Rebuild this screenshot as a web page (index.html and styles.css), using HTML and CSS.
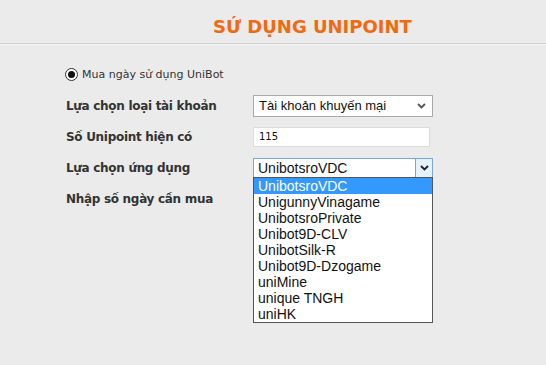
FILE: index.html
```html
<!DOCTYPE html>
<html lang="vi">

<head>
    <meta charset="UTF-8">
    <title>Sử dụng Unipoint</title>
    <link rel="stylesheet" href="styles.css">
</head>

<body>
    <header class="page-title">
        <h1>SỨ DỤNG UNIPOINT</h1>
    </header>

    <form class="use-form">
        <label class="radio-row">
            <span class="radio"><span class="radio-dot"></span></span>
            Mua ngày sử dụng UniBot
        </label>

        <div class="field-grid">
            <div class="field-label">Lựa chọn loại tài khoản</div>
            <div class="select big">
                <span>Tài khoản khuyến mại</span>
                <svg class="chev" width="9" height="6" viewBox="0 0 9 6"><path d="M1 1 L4.5 4.5 L8 1" fill="none" stroke="#555" stroke-width="1.8"/></svg>
            </div>

            <div class="field-label">Số Unipoint hiện có</div>
            <div class="text-input">115</div>

            <div class="field-label">Lựa chọn ứng dụng</div>
            <div class="select-wrap">
                <div class="select open">
                    <span>UnibotsroVDC</span>
                    <span class="arrow-btn">
                        <svg width="9" height="6" viewBox="0 0 9 6"><path d="M1 1 L4.5 4.5 L8 1" fill="none" stroke="#222" stroke-width="1.8"/></svg>
                    </span>
                </div>
                <ul class="dropdown">
                    <li class="active">UnibotsroVDC</li>
                    <li>UnigunnyVinagame</li>
                    <li>UnibotsroPrivate</li>
                    <li>Unibot9D-CLV</li>
                    <li>UnibotSilk-R</li>
                    <li>Unibot9D-Dzogame</li>
                    <li>uniMine</li>
                    <li>unique TNGH</li>
                    <li>uniHK</li>
                </ul>
            </div>

            <div class="field-label">Nhập số ngày cần mua</div>
            <div></div>
        </div>
    </form>
</body>

</html>
```

FILE: styles.css
```css
html,
body {
    margin: 0;
    height: 100%;
}

body {
    background-color: #ebebeb;
    font-family: "DejaVu Sans", Verdana, sans-serif;
    color: #333;
}

.page-title {
    height: 44px;
    border-bottom: 1px solid #cfcfcf;
    box-shadow: 0 1px 0 #f6f6f6;
    padding-left: 213px;
    box-sizing: border-box;
}

.page-title h1 {
    margin: 0;
    padding-top: 15px;
    font-size: 18px;
    line-height: 24px;
    color: #f26a10;
    font-weight: bold;
}

.use-form {
    padding: 22px 0 0 65px;
}

.radio-row {
    display: flex;
    align-items: center;
    gap: 4px;
    font-size: 11px;
    color: #333;
    height: 16px;
}

.radio {
    width: 11px;
    height: 11px;
    border: 1px solid #333;
    border-radius: 50%;
    background: #fff;
    display: flex;
    align-items: center;
    justify-content: center;
}

.radio-dot {
    width: 7px;
    height: 7px;
    border-radius: 50%;
    background: #111;
}

.field-grid {
    display: grid;
    grid-template-columns: 188px 180px;
    grid-auto-rows: 31px;
    align-items: center;
    margin-top: 8px;
}

.field-label {
    font-size: 12px;
    font-weight: bold;
    letter-spacing: -0.3px;
    color: #333;
    padding-left: 1px;
}

.select {
    height: 22px;
    box-sizing: border-box;
    background: #fff;
    border: 1px solid #a9a9a9;
    display: flex;
    align-items: center;
    justify-content: space-between;
    font-family: "Liberation Sans", Arial, sans-serif;
    color: #111;
}

.select.big {
    font-size: 13px;
    padding: 0 6px 0 5px;
}

.text-input {
    width: 177px;
    height: 20px;
    box-sizing: border-box;
    background: #fff;
    border: 1px solid #dcdcdc;
    font-family: "DejaVu Sans", Verdana, sans-serif;
    font-size: 10px;
    line-height: 18px;
    padding-left: 5px;
    color: #111;
}

.select-wrap {
    position: relative;
}

.select.open {
    height: 20px;
    font-size: 14px;
    border-color: #7aa7d8;
    padding-left: 4px;
}

.arrow-btn {
    width: 16px;
    height: 18px;
    background: #e5f1fb;
    border-left: 1px solid #7aa7d8;
    display: flex;
    align-items: center;
    justify-content: center;
}

.dropdown {
    position: absolute;
    left: 0;
    top: 19px;
    width: 180px;
    box-sizing: border-box;
    margin: 0;
    padding: 0;
    list-style: none;
    background: #fff;
    border: 1px solid #555;
    font-family: "Liberation Sans", Arial, sans-serif;
    font-size: 14px;
    color: #111;
    z-index: 2;
}

.dropdown li {
    height: 16px;
    line-height: 16px;
    padding-left: 4px;
}

.dropdown li.active {
    background: #3399ff;
    color: #fff;
}
```
